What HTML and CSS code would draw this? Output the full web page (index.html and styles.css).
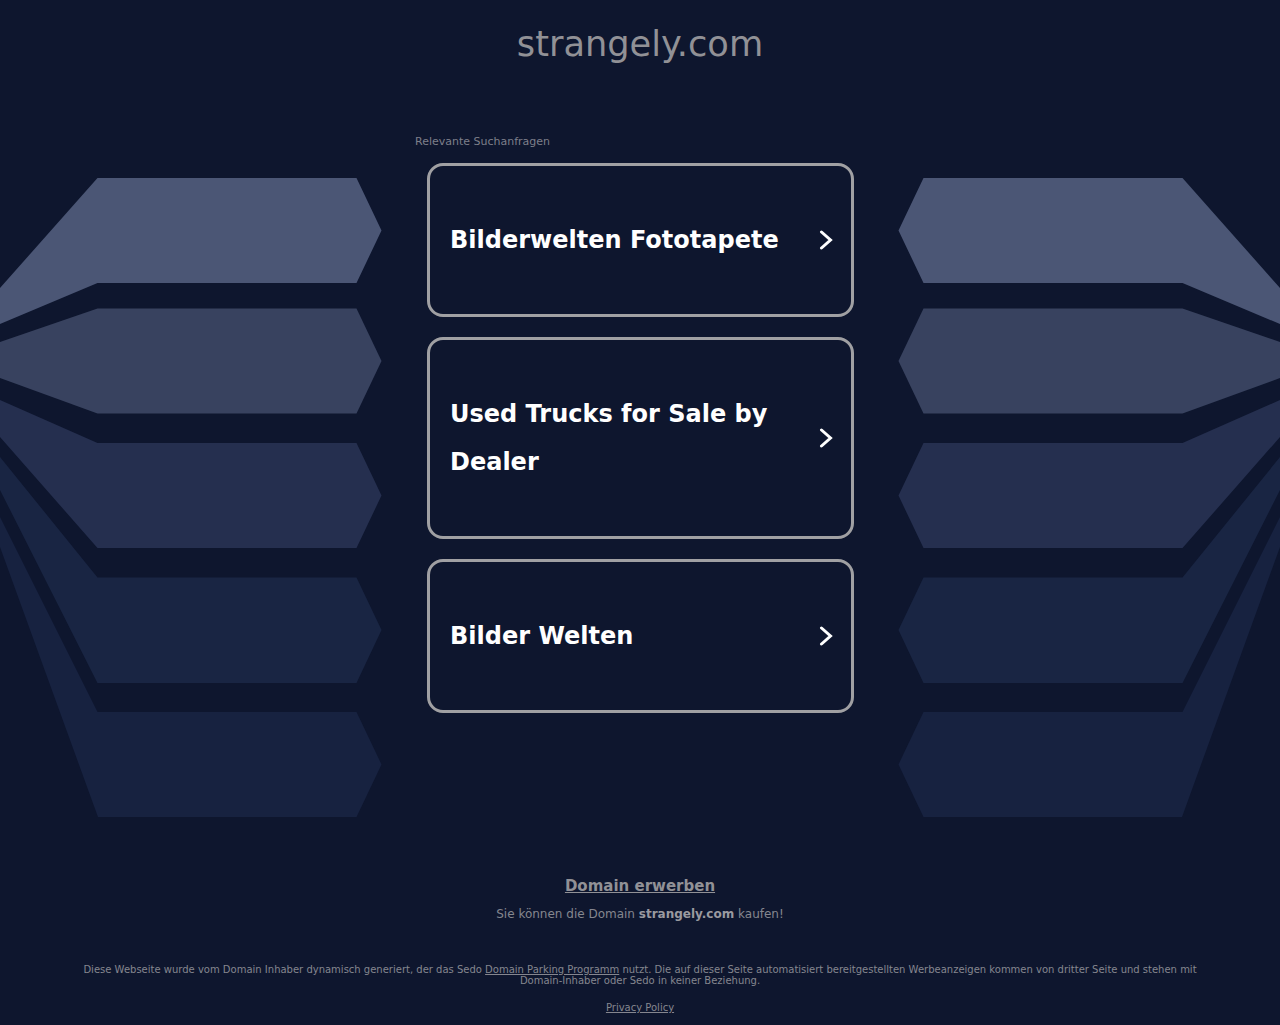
FILE: index.html
```html
<!DOCTYPE html>
<html lang="de">
<head>
<meta charset="utf-8">
<title>strangely.com</title>
<link rel="stylesheet" href="styles.css">
</head>
<body>
<svg class="backdrop" width="1280" height="1025" viewBox="0 0 1280 1025" aria-hidden="true">
  <defs>
    <g id="wing">
      <polygon class="s5" points="0,517 97.5,712 356.5,712 381.5,764.5 356.5,817 98,817 0,547"/>
      <polygon class="s4" points="0,457 97.5,577.5 356.5,577.5 381.5,630 356.5,683 97.5,683 0,490"/>
      <polygon class="s3" points="0,400 97.5,443 356.5,443 381.5,495.5 356.5,548 97.5,548 0,437"/>
      <polygon class="s2" points="0,342 97.5,308.5 356.5,308.5 381.5,361 356.5,413.5 97.5,413.5 0,378"/>
      <polygon class="s1" points="0,288 97.5,178 356.5,178 381.5,230.5 356.5,283 97.5,283 0,324"/>
    </g>
  </defs>
  <use href="#wing"/>
  <use href="#wing" transform="matrix(-1 0 0 1 1280 0)"/>
</svg>
<div class="page">
  <h1 class="domain">strangely.com</h1>
  <main class="ads">
    <p class="ads-label">Relevante Suchanfragen</p>
    <ul class="ad-list">
      <li><a class="ad" href="#"><span class="ad-text">Bilderwelten Fototapete</span>
        <svg class="chevron" width="14" height="20" viewBox="0 0 14 20"><path d="M2.5 2 L11.5 10 L2.5 18"/></svg></a></li>
      <li><a class="ad" href="#"><span class="ad-text">Used Trucks for Sale by Dealer</span>
        <svg class="chevron" width="14" height="20" viewBox="0 0 14 20"><path d="M2.5 2 L11.5 10 L2.5 18"/></svg></a></li>
      <li><a class="ad" href="#"><span class="ad-text">Bilder Welten</span>
        <svg class="chevron" width="14" height="20" viewBox="0 0 14 20"><path d="M2.5 2 L11.5 10 L2.5 18"/></svg></a></li>
    </ul>
  </main>
  <section class="buy">
    <a class="buy-link" href="#">Domain erwerben</a>
    <p class="buy-text">Sie können die Domain <strong>strangely.com</strong> kaufen!</p>
  </section>
  <footer class="legal">
    <p class="legal-text">Diese Webseite wurde vom Domain Inhaber dynamisch generiert, der das Sedo <a href="#">Domain Parking Programm</a> nutzt. Die auf dieser Seite automatisiert bereitgestellten Werbeanzeigen kommen von dritter Seite und stehen mit Domain-Inhaber oder Sedo in keiner Beziehung.</p>
    <a class="privacy" href="#">Privacy Policy</a>
  </footer>
</div>
</body>
</html>
```
FILE: styles.css
```css
* { box-sizing: border-box; }
html, body { margin: 0; padding: 0; }
body {
  position: relative;
  height: 1025px;
  overflow: hidden;
  background: #0e162e;
  font-family: "DejaVu Sans", sans-serif;
  color: #919196;
}
a { color: inherit; }

.backdrop { position: absolute; top: 0; left: 0; }
.s1 { fill: #4b5675; }
.s2 { fill: #38425f; }
.s3 { fill: #252f4f; }
.s4 { fill: #192543; }
.s5 { fill: #172240; }

.page {
  position: relative;
  display: flex;
  flex-direction: column;
  align-items: center;
}
.domain {
  margin: 0;
  padding-top: 23px;
  font-size: 35.2px;
  line-height: 42px;
  font-weight: 400;
  color: #919196;
}

.ads { width: 450px; margin-top: 70px; }
.ads-label {
  margin: 0 0 15px;
  font-size: 11px;
  line-height: 13px;
  color: #7d7f8a;
}
.ad-list {
  list-style: none;
  margin: 0;
  padding: 0 0 0 12px;
  width: 439px;
  display: flex;
  flex-direction: column;
  gap: 20px;
}
.ad {
  display: flex;
  align-items: center;
  justify-content: space-between;
  padding: 50px 18px 50px 20px;
  border: 3px solid #a0a0a3;
  border-radius: 16px;
  background: #0e162e;
  color: #fff;
  text-decoration: none;
}
.ad-text {
  max-width: 345px;
  font-size: 24px;
  line-height: 48px;
  font-weight: 700;
}
.chevron { flex: none; }
.chevron path {
  fill: none;
  stroke: #fff;
  stroke-width: 3;
  stroke-linecap: round;
  stroke-linejoin: miter;
}

.buy { margin-top: 163px; text-align: center; }
.buy-link {
  font-size: 15px;
  line-height: 20px;
  font-weight: 700;
  color: #919196;
}
.buy-text {
  margin: 10px 0 0;
  font-size: 12px;
  line-height: 16px;
  color: #85868f;
}
.buy-text strong { color: #9a9aa0; }

.legal {
  width: 1152px;
  margin-top: 42px;
  text-align: center;
  font-size: 10px;
  line-height: 11px;
  color: #85868f;
}
.legal-text { margin: 0 0 16px; }
```
